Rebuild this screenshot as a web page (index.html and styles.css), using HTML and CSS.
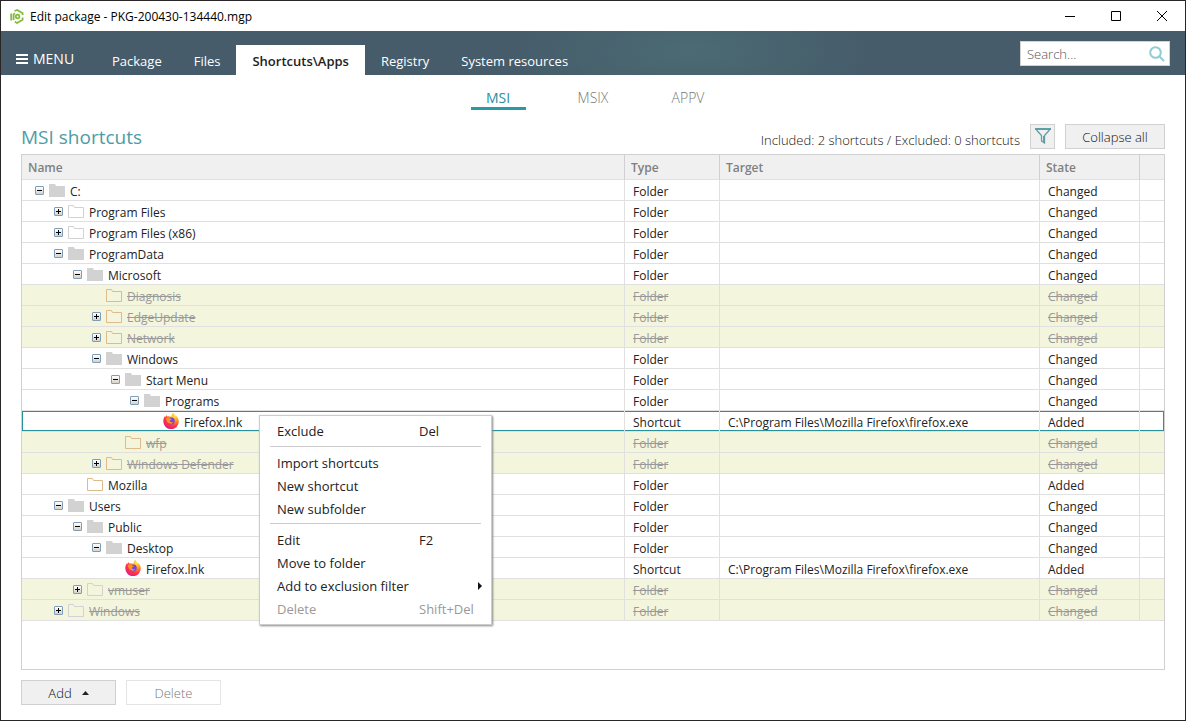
FILE: index.html
```html
<!DOCTYPE html>
<html lang="en">
<head>
<meta charset="utf-8">
<title>Edit package - PKG-200430-134440.mgp</title>
<link rel="stylesheet" href="styles.css">
</head>
<body>
<svg class="defs" width="0" height="0" aria-hidden="true">
  <defs>
    <radialGradient id="ff-body" cx="75%" cy="15%" r="95%">
      <stop offset="0" stop-color="#fff14a"/><stop offset=".35" stop-color="#ff9a1f"/>
      <stop offset=".68" stop-color="#ff3647"/><stop offset="1" stop-color="#e31587"/>
    </radialGradient>
    <symbol id="folder-full" viewBox="0 0 16 13"><path d="M0 0h6l1 2h9v11H0z" fill="#d2d2d2"/></symbol>
    <symbol id="folder-line" viewBox="0 0 16 13"><path d="M.5 .5h5l1 2h9v10H.5z" fill="none" stroke="currentColor"/></symbol>
    <symbol id="firefox" viewBox="0 0 16 16">
      <path d="M10.2 0c1.3.9 1.8 2 2 2.800.6-.2.900-.100 1.200.2 1.600 1.500 2.400 3.400 2.400 5.400A7.700 7.700 0 0 1 .3 8.500c0-2.300.6-4 1.700-5.500l.3 1.300L3.600 2l.6 1.500c1.500-.5 3-.3 4.100.3C8.500 2.300 9 1 10.200 0z" fill="url(#ff-body)"/>
      <circle cx="8.300" cy="8" r="3.400" fill="#7542e5"/>
      <path d="M2.500 5.500c1.500-1 3.500-.9 4.600.1l1.700.5c-.3.900-1.300 1.200-2 1.600.2 1.600 2.300 2 3.700 1.200-1 2.200-4.300 2.500-5.900.4C3.600 8.200 3.500 6.500 2.500 5.500z" fill="#ff9320"/>
    </symbol>
  </defs>
</svg>
<div class="window">
  <header class="titlebar">
    <svg class="logo" width="14" height="15" viewBox="0 0 14 15" fill="none" stroke="#86bb40" stroke-width="1.800"><path d="M1.200 11.500V4.500M3.600 11V5.500L4.800 4.200M4.500 2 7.200 1 12.600 4.200V6M12.600 8.500V10.800L7 14 4.800 12.800"/><circle cx="7.600" cy="7.500" r="1.800"/></svg>
    <h1 class="title">Edit package - PKG-200430-134440.mgp</h1>
    <div class="controls">
      <button type="button" aria-label="Minimize"><svg width="10" height="10"><path d="M0 5.500h10" stroke="#000"/></svg></button>
      <button type="button" aria-label="Maximize"><svg width="10" height="10"><path d="M.5 .5h9v9h-9z" stroke="#000" fill="none"/></svg></button>
      <button type="button" aria-label="Close"><svg width="10" height="10"><path d="M0 0l10 10M10 0L0 10" stroke="#000"/></svg></button>
    </div>
  </header>
  <div class="ribbon">
    <button type="button" class="menu-button"><svg width="12" height="10"><path d="M0 1h12M0 5h12M0 9h12" stroke="#fff" stroke-width="2"/></svg>MENU</button>
    <nav class="tabs">
      <a href="#package">Package</a><a href="#files">Files</a><a href="#shortcuts" class="active">Shortcuts\Apps</a><a href="#registry">Registry</a><a href="#resources">System resources</a>
    </nav>
    <div class="search">
      <input type="text" placeholder="Search..." aria-label="Search">
      <svg width="16" height="16" viewBox="0 0 16 16" fill="none" stroke="#8fcdd5" stroke-width="2"><circle cx="6.500" cy="6.500" r="5.300"/><path d="M10.500 10.500l4.500 4.500"/></svg>
    </div>
  </div>
  <main class="content">
    <nav class="formats"><a href="#msi" class="active">MSI</a><a href="#msix">MSIX</a><a href="#appv">APPV</a></nav>
    <div class="heading">
      <h2>MSI shortcuts</h2>
      <span class="summary">Included: 2 shortcuts / Excluded: 0 shortcuts</span>
      <button type="button" class="btn filter" aria-label="Filter"><svg width="16" height="16" viewBox="0 0 16 16" fill="none" stroke="#5f9ea5"><path d="M0 1h16" stroke-width="2"/><path d="M1.500 2l5 5.500V13l3 2V7.500L14.500 2" stroke-width="1.300"/><path d="M9 14V8" stroke-width="2"/></svg></button>
      <button type="button" class="btn collapse">Collapse all</button>
    </div>
    <div class="grid">
      <table>
        <colgroup><col><col class="c-type"><col class="c-target"><col class="c-state"><col class="c-end"></colgroup>
        <thead><tr><th>Name</th><th>Type</th><th>Target</th><th>State</th><th></th></tr></thead>
        <tbody id="rows"></tbody>
      </table>
    </div>
    <div class="actions">
      <button type="button" class="btn">Add<svg width="7" height="4"><path d="M0 4l3.500-4L7 4z" fill="#222"/></svg></button>
      <button type="button" class="btn" disabled>Delete</button>
    </div>
  </main>
  <div class="context" role="menu">
    <button type="button" role="menuitem"><span>Exclude</span><span>Del</span></button>
    <hr>
    <button type="button" role="menuitem"><span>Import shortcuts</span></button>
    <button type="button" role="menuitem"><span>New shortcut</span></button>
    <button type="button" role="menuitem"><span>New subfolder</span></button>
    <hr>
    <button type="button" role="menuitem"><span>Edit</span><span>F2</span></button>
    <button type="button" role="menuitem"><span>Move to folder</span></button>
    <button type="button" role="menuitem" class="parent"><span>Add to exclusion filter</span><svg width="4" height="8"><path d="M0 0l4 4-4 4z" fill="#111"/></svg></button>
    <button type="button" role="menuitem" disabled><span>Delete</span><span>Shift+Del</span></button>
  </div>
</div>
<script src="tree.js"></script>
</body>
</html>
```
FILE: styles.css
```css
* { box-sizing: border-box; }
body { margin: 0; font-family: "Open Sans", "Noto Sans", sans-serif; font-size: 12px; color: #222; }
button, input { font: inherit; color: inherit; }
button { padding: 0; border: 0; background: none; }
a { color: inherit; text-decoration: none; }
svg { display: block; flex: none; }
.defs { position: absolute; }
.window { position: relative; display: flex; flex-direction: column; min-height: 100vh; border: 1px solid #2a2627; background: #fff; }

.titlebar { display: flex; align-items: center; height: 30px; padding-left: 9px; gap: 6px; color: #000; }
.title { flex: 1; margin: 0; font-size: 12px; font-weight: 400; }
.controls { display: flex; }
.controls button { display: grid; place-items: center; width: 46px; height: 29px; }

.ribbon { display: flex; height: 44px; padding: 0 15px; color: #fff; background: radial-gradient(ellipse 180px 60px at 690px 20px, #4b6b74, transparent), #465c6a; }
.menu-button { display: flex; align-items: center; gap: 5px; width: 80px; padding-top: 11px; font-size: 14px; white-space: nowrap; }
.tabs { display: flex; flex: 1; align-items: flex-end; font-size: 13px; white-space: nowrap; }
.tabs a { height: 30px; padding: 0 16px; line-height: 32px; }
.tabs .active { background: #fff; color: #222; font-weight: 600; }
.search { display: flex; align-items: center; align-self: flex-start; width: 150px; height: 25px; margin-top: 10px; padding: 0 4px 0 6px; border: 1px solid #d2d2d2; background: #fff; }
.search input { flex: 1; min-width: 0; padding: 0; border: 0; outline: 0; background: none; font-size: 13px; font-weight: 300; color: #222; }
.search input::placeholder { color: #555; opacity: 1; }

.content { display: flex; flex: 1; flex-direction: column; padding: 10px 20px 15px; }
.formats { display: flex; justify-content: center; gap: 40px; font-size: 14px; font-weight: 300; color: #777; }
.formats a { width: 55px; height: 25px; line-height: 26px; text-align: center; }
.formats .active { border-bottom: 3px solid #2a9ba5; color: #2a8f9a; font-weight: 400; }
.heading { display: flex; align-items: center; gap: 10px; height: 25px; margin: 14px 0 5px; font-weight: 300; }
.heading h2 { flex: 1; margin: 0; font-size: 19px; font-weight: 400; color: #4f9ba5; }
.summary { padding-top: 6px; font-size: 13px; color: #111; }
.btn { display: flex; align-items: center; justify-content: center; gap: 10px; width: 95px; height: 25px; border: 1px solid #d0d0d0; background: #f0f0f0; color: #111; font-size: 13px; font-weight: 300; }
.btn:disabled { border-color: #e5e5e5; background: #fff; color: #777; }
.filter { width: 25px; padding-bottom: 2px; }
.collapse { width: 100px; }

.grid { flex: 1; border: 1px solid #d0d0d0; }
table { width: 100%; table-layout: fixed; border-collapse: separate; border-spacing: 0; }
.c-type { width: 95px; }
.c-target { width: 320px; }
.c-state { width: 100px; }
.c-end { width: 24px; }
th { height: 25px; padding: 0 6px; border-right: 1px solid #d0d0d0; border-bottom: 1px solid #e0e0e0; background: #f0f0f0; color: #808080; font-weight: 600; text-align: left; }
td { height: 21px; padding: 4px 8px 0; border-right: 1px solid #e0e0e0; border-bottom: 1px solid #e0e0e0; line-height: 16px; white-space: nowrap; }
th:last-child, td:last-child { border-right: 0; }
.name { padding: 0; }
.node { display: flex; align-items: center; height: 20px; padding-left: 13px; }
.indent { width: calc(var(--depth) * 19px); }
.toggle { display: grid; place-items: center; width: 9px; height: 9px; margin-right: 5px; border: 1px solid #7f9db9; border-radius: 1px; background: linear-gradient(#fff, #d6d2c6); }
.toggle.none { visibility: hidden; }
.icon { width: 16px; height: 13px; margin-right: 5px; color: #d2d2d2; }
.icon.app { height: 16px; }
.icon.tan { color: #dfbb8c; }
.label { padding-top: 4px; }
.excluded td { background: #f3f5dd; color: #999; text-decoration: line-through; }
.selected td { box-shadow: inset 0 1px #2a919b, inset 0 -1px #2a919b; }
.selected td:first-child { box-shadow: inset 0 1px #2a919b, inset 0 -1px #2a919b, inset 1px 0 #2a919b; }
.selected td:last-child { box-shadow: inset 0 1px #2a919b, inset 0 -1px #2a919b, inset -1px 0 #2a919b; }
.actions { display: flex; gap: 10px; margin-top: 10px; }

.context { position: absolute; left: 258px; top: 414px; width: 233px; padding: 3px 10px 4px; border: 1px solid #ccc; background: #fff; box-shadow: 1px 1px 2px #888; font-size: 13px; }
.context button { display: grid; grid-template-columns: 142px 1fr; align-items: center; width: 100%; height: 23px; padding-left: 7px; text-align: left; white-space: nowrap; }
.context .parent { grid-template-columns: 1fr 4px; }
.context .parent svg { margin-left: 1px; overflow: visible; }
.context button:disabled { color: #999; }
.context hr { height: 1px; margin: 4px 0 4px; border: 0; background: #ccc; }
.context hr + button ~ hr { margin: 3px 0 4px; }
```
FILE: tree.js
```js
// depth, expander, icon, label, excluded
const nodes = [
  [0, '-', 'full', 'C:'],
  [1, '+', 'line', 'Program Files'],
  [1, '+', 'line', 'Program Files (x86)'],
  [1, '-', 'full', 'ProgramData'],
  [2, '-', 'full', 'Microsoft'],
  [3, '', 'tan', 'Diagnosis', true],
  [3, '+', 'tan', 'EdgeUpdate', true],
  [3, '+', 'tan', 'Network', true],
  [3, '-', 'full', 'Windows'],
  [4, '-', 'full', 'Start Menu'],
  [5, '-', 'full', 'Programs'],
  [6, '', 'app', 'Firefox.lnk'],
  [4, '', 'tan', 'wfp', true],
  [3, '+', 'tan', 'Windows Defender', true],
  [2, '', 'tan', 'Mozilla'],
  [1, '-', 'full', 'Users'],
  [2, '-', 'full', 'Public'],
  [3, '-', 'full', 'Desktop'],
  [4, '', 'app', 'Firefox.lnk'],
  [2, '+', 'line', 'vmuser', true],
  [1, '+', 'line', 'Windows', true],
];

const symbols = { full: 'folder-full', line: 'folder-line', tan: 'folder-line', app: 'firefox' };

function toggle(kind) {
  if (!kind) return '<span class="toggle none"></span>';
  const stroke = kind === '+' ? 'M1 3.5h5M3.5 1v5' : 'M1 3.5h5';
  const text = kind === '+' ? 'Expand' : 'Collapse';
  return `<button type="button" class="toggle" aria-label="${text}"><svg width="7" height="7"><path d="${stroke}" stroke="#000"/></svg></button>`;
}

document.getElementById('rows').innerHTML = nodes.map(([depth, kind, icon, label, excluded], i) => {
  const app = icon === 'app';
  const state = app || label === 'Mozilla' ? 'Added' : 'Changed';
  const rowClass = excluded ? 'excluded' : i === 11 ? 'selected' : '';
  return `<tr class="${rowClass}"><td class="name"><div class="node"><span class="indent" style="--depth:${depth}"></span>${toggle(kind)}<svg class="icon ${icon}"><use href="#${symbols[icon]}"/></svg><span class="label">${label}</span></div></td>` +
    `<td>${app ? 'Shortcut' : 'Folder'}</td><td>${app ? 'C:\\Program Files\\Mozilla Firefox\\firefox.exe' : ''}</td><td>${state}</td><td></td></tr>`;
}).join('');
```
